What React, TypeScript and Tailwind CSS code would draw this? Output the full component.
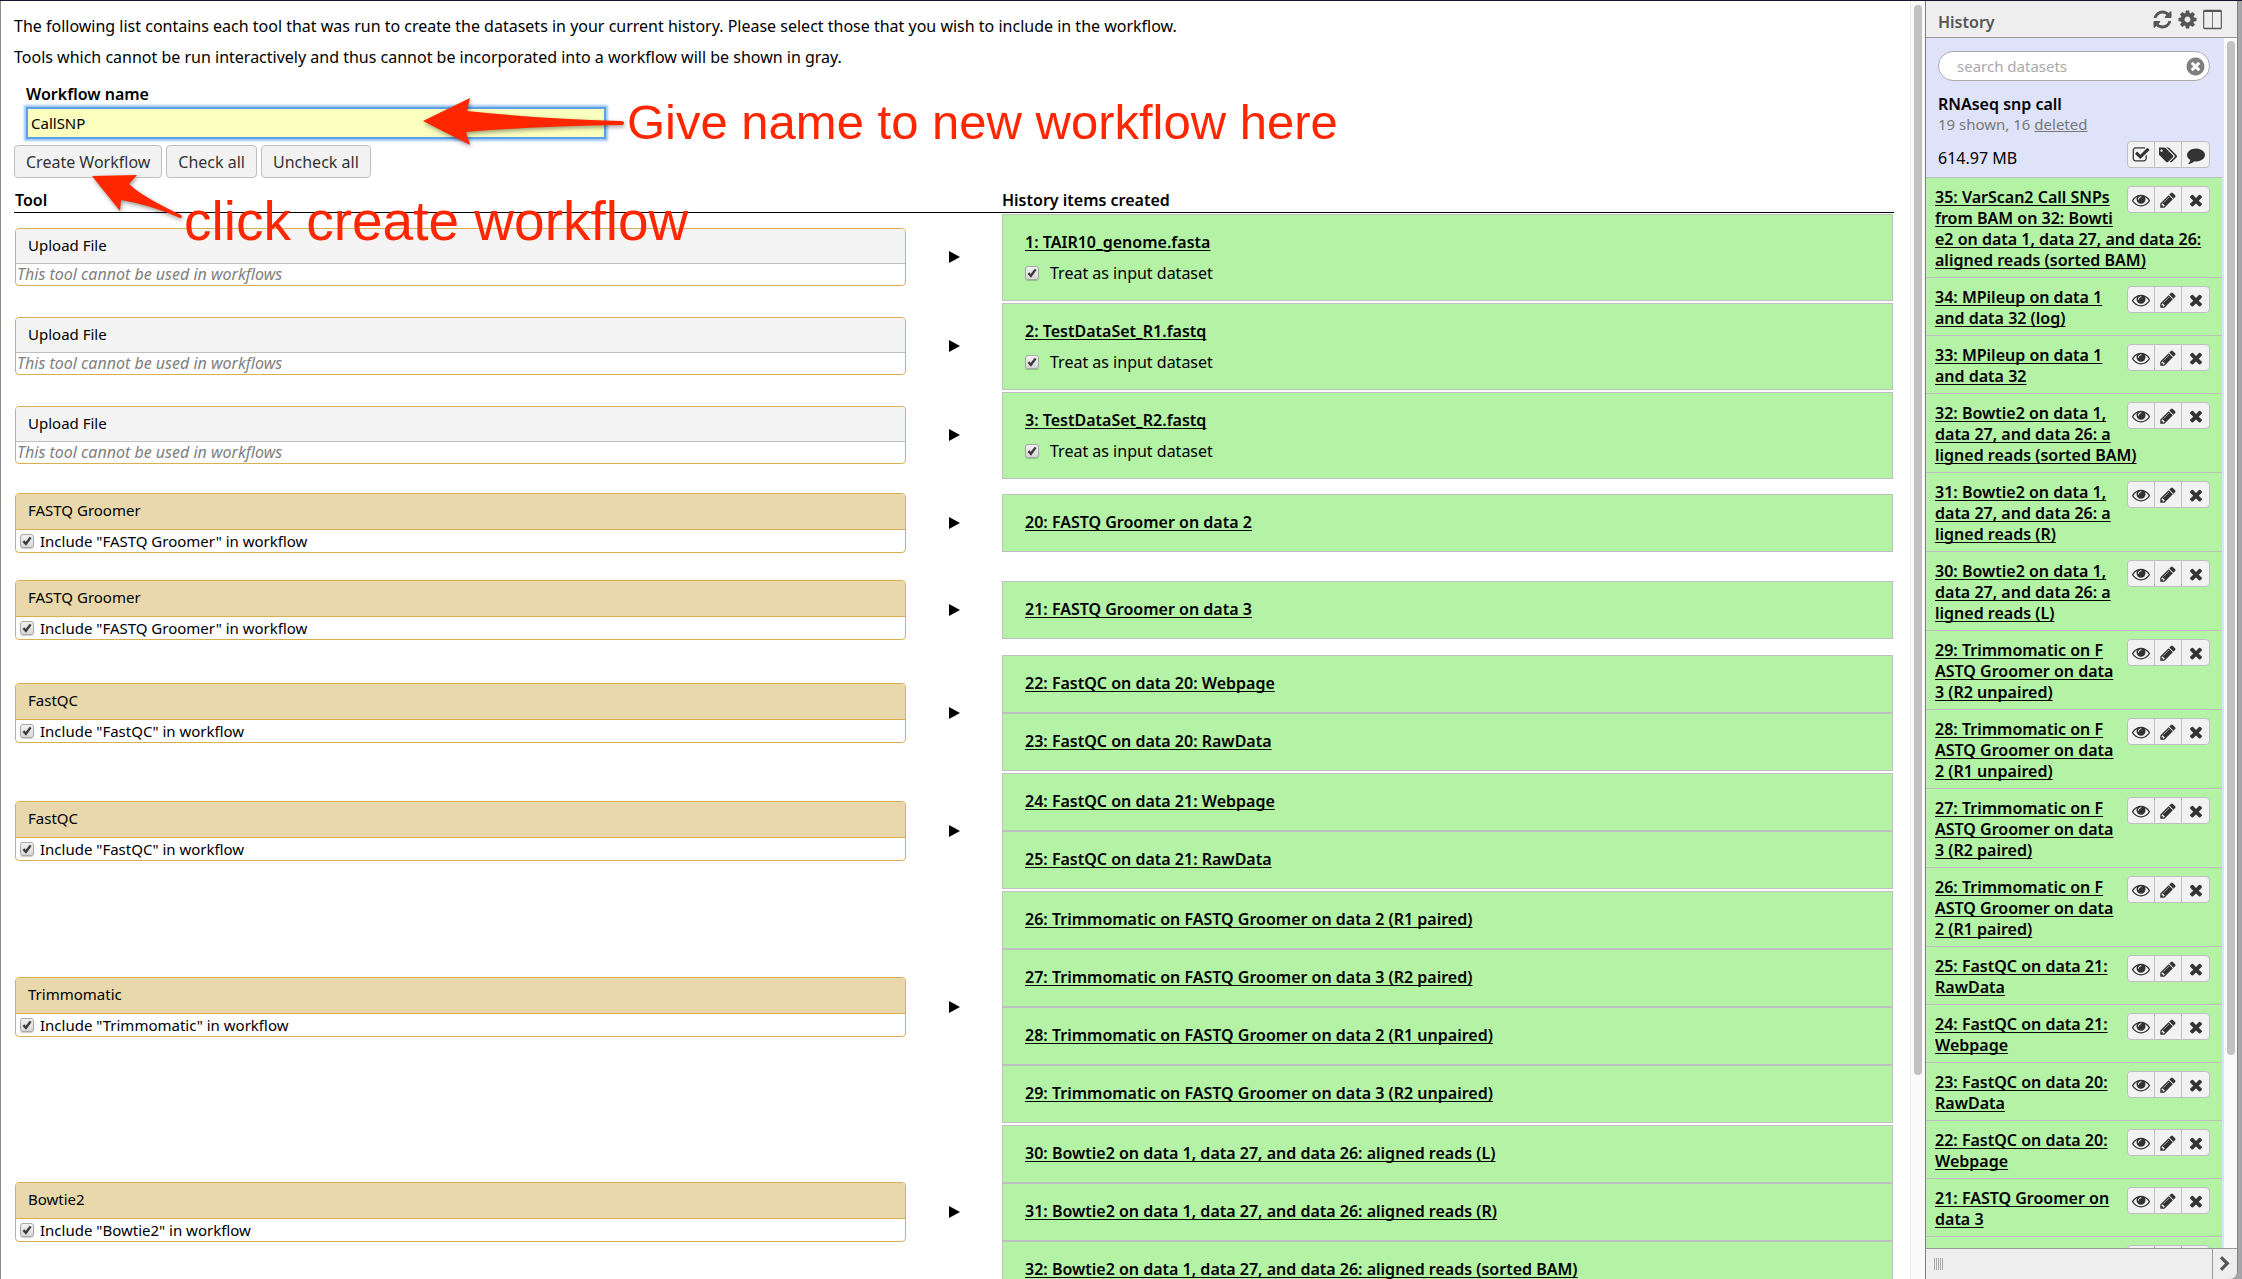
import React from "react";

type IconProps = { d: string; size?: string; box?: string };

function Icon({ d, size = "size-[18px]", box = "0 0 1792 1792" }: IconProps) {
  return (
    <svg viewBox={box} className={size} fill="currentColor" aria-hidden="true">
      <path d={d} />
    </svg>
  );
}

const EYE =
  "M1664 960q-152-236-381-353 61 104 61 225 0 185-131.500 316.500t-316.500 131.500-316.500-131.500-131.500-316.500q0-121 61-225-229 117-381 353 133 205 333.500 326.500t434.500 121.500 434.500-121.500 333.500-326.500zm-720-384q0-20-14-34t-34-14q-125 0-214.500 89.500t-89.500 214.500q0 20 14 34t34 14 34-14 14-34q0-86 61-147t147-61q20 0 34-14t14-34zm848 384q0 34-20 69-140 230-376.500 368.500t-499.500 138.500-499.500-139-376.500-368q-20-35-20-69t20-69q140-229 376.500-368t499.500-139 499.500 139 376.500 368q20 35 20 69z";
const PENCIL =
  "M491 1536l91-91-235-235-91 91v107h128v128h107zm523-928q0-22-22-22-10 0-17 7l-542 542q-7 7-7 17 0 22 22 22 10 0 17-7l542-542q7-7 7-17zm-54-192l416 416-832 832h-416v-416zm683 96q0 53-37 90l-166 166-416-416 166-165q36-38 90-38 53 0 91 38l235 234q37 39 37 91z";
const TIMES =
  "M1490 1322q0 40-28 68l-136 136q-28 28-68 28t-68-28l-294-294-294 294q-28 28-68 28t-68-28l-136-136q-28-28-28-68t28-68l294-294-294-294q-28-28-28-68t28-68l136-136q28-28 68-28t68 28l294 294 294-294q28-28 68-28t68 28l136 136q28 28 28 68t-28 68l-294 294 294 294q28 28 28 68z";
const REFRESH =
  "M1639 1056q0 5-1 7-64 268-268 434.500t-478 166.500q-146 0-282.500-55t-243.500-157l-129 129q-19 19-45 19t-45-19-19-45v-448q0-26 19-45t45-19h448q26 0 45 19t19 45-19 45l-137 137q71 66 161 102t187 36q134 0 250-65t186-179q11-17 53-117 8-23 30-23h192q13 0 22.500 9.500t9.500 22.500zm25-800v448q0 26-19 45t-45 19h-448q-26 0-45-19t-19-45 19-45l138-138q-148-137-349-137-134 0-250 65t-186 179q-11 17-53 117-8 23-30 23h-199q-13 0-22.500-9.500t-9.500-22.500v-7q65-268 270-434.500t480-166.500q146 0 284 55.500t245 156.500l130-129q19-19 45-19t45 19 19 45z";
const COG =
  "M1152 896q0-106-75-181t-181-75-181 75-75 181 75 181 181 75 181-75 75-181zm512-109v222q0 12-8 23t-20 13l-185 28q-19 54-39 91 35 50 107 138 10 12 10 25t-9 23q-27 37-99 108t-94 71q-12 0-26-9l-138-108q-44 23-91 38-16 136-29 186-7 28-36 28h-222q-14 0-24.500-8.500t-11.500-21.500l-28-184q-49-16-90-37l-141 107q-10 9-25 9-14 0-25-11-126-114-165-168-7-10-7-23 0-12 8-23 15-21 51-66.500t54-70.500q-27-50-41-99l-183-27q-13-2-21-12.500t-8-23.500v-222q0-12 8-23t19-13l186-28q14-46 39-92-40-57-107-138-10-12-10-24 0-10 9-23 26-36 98.500-107.500t94.500-71.500q13 0 26 10l138 107q44-23 91-38 16-136 29-186 7-28 36-28h222q14 0 24.500 8.500t11.500 21.500l28 184q49 16 90 37l142-107q9-9 24-9 13 0 25 10 129 119 165 170 7 8 7 22 0 12-8 23-15 21-51 66.500t-54 70.500q26 50 41 98l183 28q13 2 21 12.500t8 23.500z";
const COLUMNS =
  "M224 1600h640v-1344h-672v1312q0 13 9.500 22.500t22.500 9.500zm1376-32v-1312h-672v1344h640q13 0 22.500-9.500t9.500-22.500zm96-1376v1408q0 50-35 85t-85 35h-1360q-50 0-85-35t-35-85v-1408q0-50 35-85t85-35h1360q50 0 85 35t35 85z";
const TIMES_CIRCLE =
  "M1277 1122q0-26-19-45l-181-181 181-181q19-19 19-45 0-27-19-46l-90-90q-19-19-46-19-26 0-45 19l-181 181-181-181q-19-19-45-19-27 0-46 19l-90 90q-19 19-19 46 0 26 19 45l181 181-181 181q-19 19-19 45 0 27 19 46l90 90q19 19 46 19 26 0 45-19l181-181 181 181q19 19 45 19 27 0 46-19l90-90q19-19 19-46zm387-226q0 209-103 385.500t-279.500 279.500-385.500 103-385.500-103-279.500-279.500-103-385.500 103-385.500 279.500-279.500 385.500-103 385.500 103 279.500 279.500 103 385.500z";
const CHECK_SQUARE =
  "M1472 930v318q0 119-84.500 203.500t-203.500 84.500h-832q-119 0-203.500-84.500t-84.500-203.500v-832q0-119 84.500-203.500t203.500-84.500h832q63 0 117 25 15 7 18 23 3 17-9 29l-49 49q-10 10-23 10-3 0-9-2-23-6-45-6h-832q-66 0-113 47t-47 113v832q0 66 47 113t113 47h832q66 0 113-47t47-113v-254q0-13 9-22l64-64q10-10 23-10 6 0 12 3 20 8 20 29zm231-489l-814 814q-24 24-57 24t-57-24l-430-430q-24-24-24-57t24-57l110-110q24-24 57-24t57 24l263 263 647-647q24-24 57-24t57 24l110 110q24 24 24 57t-24 57z";
const TAGS =
  "M384 448q0-53-37.500-90.500t-90.500-37.500-90.500 37.500-37.500 90.500 37.500 90.500 90.500 37.500 90.500-37.500 37.500-90.500zm1067 576q0 53-37 90l-491 492q-39 37-91 37-53 0-90-37l-715-716q-38-37-64.500-101t-26.500-117v-416q0-52 38-90t90-38h416q53 0 117 26.500t102 64.500l715 714q37 39 37 91zm384 0q0 53-37 90l-491 492q-39 37-91 37-36 0-59-14t-53-45l470-470q37-37 37-90 0-52-37-91l-715-714q-38-38-102-64.500t-117-26.500h224q53 0 117 26.500t102 64.500l715 714q37 39 37 91z";
const COMMENT =
  "M1792 896q0 174-120 321.500t-326 233-450 85.500q-70 0-145-8-198 175-460 242-49 14-114 22-17 2-30.500-9t-17.500-29v-1q-3-4-.500-12t2-10 4.500-9.500l6-9 7-8.500 8-9q7-8 31-34.500t34.500-38 31-39.500 32.500-51 27-59 26-76q-157-89-247.500-220t-90.500-281q0-130 71-248.500t191-204.500 286-136.500 348-50.500q244 0 450 85.500t326 233 120 321.500z";
const CHEVRON =
  "M1363 877l-742 742q-19 19-45 19t-45-19l-166-166q-19-19-19-45t19-45l531-531-531-531q-19-19-19-45t19-45l166-166q19-19 45-19t45 19l742 742q19 19 19 45t-19 45z";

type Row = { tool: string; items: string[]; input?: boolean };

const rows: Row[] = [
  { tool: "Upload File", items: ["1: TAIR10_genome.fasta"], input: true },
  { tool: "Upload File", items: ["2: TestDataSet_R1.fastq"], input: true },
  { tool: "Upload File", items: ["3: TestDataSet_R2.fastq"], input: true },
  { tool: "FASTQ Groomer", items: ["20: FASTQ Groomer on data 2"] },
  { tool: "FASTQ Groomer", items: ["21: FASTQ Groomer on data 3"] },
  { tool: "FastQC", items: ["22: FastQC on data 20: Webpage", "23: FastQC on data 20: RawData"] },
  { tool: "FastQC", items: ["24: FastQC on data 21: Webpage", "25: FastQC on data 21: RawData"] },
  {
    tool: "Trimmomatic",
    items: [
      "26: Trimmomatic on FASTQ Groomer on data 2 (R1 paired)",
      "27: Trimmomatic on FASTQ Groomer on data 3 (R2 paired)",
      "28: Trimmomatic on FASTQ Groomer on data 2 (R1 unpaired)",
      "29: Trimmomatic on FASTQ Groomer on data 3 (R2 unpaired)",
    ],
  },
  {
    tool: "Bowtie2",
    items: [
      "30: Bowtie2 on data 1, data 27, and data 26: aligned reads (L)",
      "31: Bowtie2 on data 1, data 27, and data 26: aligned reads (R)",
      "32: Bowtie2 on data 1, data 27, and data 26: aligned reads (sorted BAM)",
    ],
  },
];

const history: string[][] = [
  ["35: VarScan2 Call SNPs", "from BAM on 32: Bowti", "e2 on data 1, data 27, and data 26:", "aligned reads (sorted BAM)"],
  ["34: MPileup on data 1", "and data 32 (log)"],
  ["33: MPileup on data 1", "and data 32"],
  ["32: Bowtie2 on data 1,", "data 27, and data 26: a", "ligned reads (sorted BAM)"],
  ["31: Bowtie2 on data 1,", "data 27, and data 26: a", "ligned reads (R)"],
  ["30: Bowtie2 on data 1,", "data 27, and data 26: a", "ligned reads (L)"],
  ["29: Trimmomatic on F", "ASTQ Groomer on data", "3 (R2 unpaired)"],
  ["28: Trimmomatic on F", "ASTQ Groomer on data", "2 (R1 unpaired)"],
  ["27: Trimmomatic on F", "ASTQ Groomer on data", "3 (R2 paired)"],
  ["26: Trimmomatic on F", "ASTQ Groomer on data", "2 (R1 paired)"],
  ["25: FastQC on data 21:", "RawData"],
  ["24: FastQC on data 21:", "Webpage"],
  ["23: FastQC on data 20:", "RawData"],
  ["22: FastQC on data 20:", "Webpage"],
  ["21: FASTQ Groomer on", "data 3"],
];

function Check() {
  return (
    <span className="relative block size-[14px] shrink-0">
      <input
        type="checkbox"
        defaultChecked
        className="peer block size-[14px] appearance-none rounded-[3px] border border-[#a8a8a8] bg-linear-to-b from-[#f2f2f2] to-[#d8d8d8] shadow-[0_1px_1px_rgba(0,0,0,0.2)]"
      />
      <svg
        viewBox="0 0 14 14"
        className="pointer-events-none absolute inset-0 hidden size-[14px] peer-checked:block"
        fill="none"
        stroke="#3c3c3c"
        strokeWidth="2.4"
        aria-hidden="true"
      >
        <path d="M3.4 7.2 L5.9 9.8 L10.6 3.4" />
      </svg>
    </span>
  );
}

function ToolCard({ row }: { row: Row }) {
  if (row.input) {
    return (
      <section className="flex h-[58px] flex-col overflow-hidden rounded border border-[#d8b04f]">
        <h2 className="h-[35px] shrink-0 border-b border-[#bfbfbf] bg-[#f4f4f4] px-3 leading-8">{row.tool}</h2>
        <p className="pl-px text-base leading-5 text-[#808080] italic">This tool cannot be used in workflows</p>
      </section>
    );
  }
  return (
    <section className="flex h-[60px] flex-col overflow-hidden rounded border border-[#d8b04f]">
      <h2 className="h-9 shrink-0 border-b border-[#d8b04f] bg-[#e9d8ab] px-3 leading-8">{row.tool}</h2>
      <label className="flex items-center gap-[6px] pl-1 leading-[22px]">
        <Check />
        Include "{row.tool}" in workflow
      </label>
    </section>
  );
}

function IconButtons({ label, icons }: { label: string; icons: { name: string; d: string; box?: string }[] }) {
  return (
    <div className="flex h-[27px] shrink-0 divide-x divide-[#bfbfbf] overflow-hidden rounded border border-[#bfbfbf] bg-[#f2f2f2] text-[#333]">
      {icons.map((i) => (
        <button key={i.name} type="button" aria-label={i.name + " " + label} className="flex w-[27px] items-center justify-center">
          <Icon d={i.d} box={i.box} />
        </button>
      ))}
    </div>
  );
}

const itemIcons = [
  { name: "View", d: EYE },
  { name: "Edit", d: PENCIL },
  { name: "Delete", d: TIMES },
];
const historyIcons = [
  { name: "Select", d: CHECK_SQUARE },
  { name: "Tag", d: TAGS, box: "0 0 1835 1792" },
  { name: "Annotate", d: COMMENT },
];

function MainPanel() {
  return (
    <main className="relative min-w-0 flex-1 overflow-hidden pr-4 pl-[13px]">
      <p className="mt-[13px] text-base leading-6">
        The following list contains each tool that was run to create the datasets in your current history. Please select those that you
        wish to include in the workflow.
      </p>
      <p className="mt-[7px] text-base leading-6">
        Tools which cannot be run interactively and thus cannot be incorporated into a workflow will be shown in gray.
      </p>
      <div className="mt-[15px] ml-3 flex flex-col">
        <label htmlFor="workflow-name" className="text-base leading-5 font-semibold">
          Workflow name
        </label>
        <input
          id="workflow-name"
          defaultValue="CallSNP"
          className="mt-[3px] h-8 w-[580px] border-2 border-[#5e9fe8] bg-[#faffbd] px-[3px] shadow-[0_0_2px_2px_#9cc6f6] outline-none"
        />
      </div>
      <div className="mt-[6px] flex gap-1 text-base text-[#333]">
        <button type="button" className="h-[33px] rounded border border-[#bfbfbf] bg-[#f2f2f2] px-[11px]">Create Workflow</button>
        <button type="button" className="h-[33px] rounded border border-[#bfbfbf] bg-[#f2f2f2] px-[11px]">Check all</button>
        <button type="button" className="h-[33px] rounded border border-[#bfbfbf] bg-[#f2f2f2] px-[11px]">Uncheck all</button>
      </div>
      <table className="mt-[11px] w-full table-fixed border-collapse">
        <colgroup>
          <col className="w-[47.5%]" />
          <col className="w-[5%]" />
          <col className="w-[47.5%]" />
        </colgroup>
        <thead>
          <tr className="h-[23px] border-b border-black text-left text-base leading-[22px]">
            <th className="px-px font-semibold">Tool</th>
            <th aria-label="Produces" />
            <th className="px-px font-semibold">History items created</th>
          </tr>
        </thead>
        <tbody>
          {rows.map((row, n) => (
            <tr key={n} className={row.input ? "h-[89px]" : "h-[87px]"}>
              <td className="p-px">
                <ToolCard row={row} />
              </td>
              <td>
                <svg viewBox="0 0 11 12" className="mx-auto h-3 w-[11px]" aria-hidden="true">
                  <path d="M0 0 L11 6 L0 12 Z" />
                </svg>
              </td>
              <td className="p-px">
                {row.items.map((item) => (
                  <div key={item} className="border border-[#bfbfbf] bg-[#b4f2a6] px-[22px] pt-[17px] text-base leading-5">
                    <a href="#" className="block font-semibold underline decoration-1 underline-offset-2 [text-decoration-skip-ink:none]">
                      {item}
                    </a>
                    {row.input ? (
                      <label className="mt-[11px] mb-[17px] flex items-center gap-[11px]">
                        <Check />
                        Treat as input dataset
                      </label>
                    ) : (
                      <div className="h-[19px]" />
                    )}
                  </div>
                ))}
              </td>
            </tr>
          ))}
        </tbody>
      </table>

      <div className="pointer-events-none absolute top-0 left-0 font-['Liberation_Sans',Arial,sans-serif] leading-[60px] whitespace-nowrap text-[#ff2600]">
        <svg viewBox="0 0 640 240" className="h-[240px] w-[640px] drop-shadow-[1px_2px_2px_rgba(0,0,0,0.4)]" fill="currentColor" aria-hidden="true">
          <path d="M422 120 L469 97 L466 110 Q540 118 620 120 Q623 120 623 122 Q623 124 620 124 Q540 125 465 131 L469 144 Z" />
          <path d="M91 175 L136 174 L128 183 Q140 195 180 214 Q182 217 179 217 Q150 204 120 199 L119 210 Z" />
        </svg>
        <p className="absolute top-[91px] left-[626px] text-[49px]">Give name to new workflow here</p>
        <p className="absolute top-[190px] left-[183px] text-[55px]">click create workflow</p>
      </div>
    </main>
  );
}

function HistoryPanel() {
  return (
    <aside className="flex w-[313px] shrink-0 flex-col overflow-hidden rounded-br-lg border-r border-l border-[#808080] bg-white">
      <header className="flex h-[37px] shrink-0 items-center border-b border-[#999] bg-[#eee] pr-[14px] pl-3 text-[#555]">
        <h1 className="mt-[6px] flex-1 text-base font-semibold">History</h1>
        <div className="flex gap-1">
          <button type="button" aria-label="Refresh history"><Icon d={REFRESH} size="size-[21px]" /></button>
          <button type="button" aria-label="History options"><Icon d={COG} size="size-[21px]" /></button>
          <button type="button" aria-label="View all histories"><Icon d={COLUMNS} size="size-[21px]" /></button>
        </div>
      </header>
      <div className="flex min-h-0 flex-1">
        <div className="min-w-0 flex-1 overflow-hidden bg-[#dfe3fa] pr-0.5">
          <div className="h-[139px] pt-[13px] pr-3 pl-3">
            <div className="flex h-[30px] items-center rounded-full border border-[#aaa] bg-white pr-[3px] pl-[18px]">
              <input aria-label="search datasets" placeholder="search datasets" className="min-w-0 flex-1 bg-transparent outline-none placeholder:text-[#a9a9a9]" />
              <button type="button" aria-label="Clear search" className="text-[#7f7f7f]"><Icon d={TIMES_CIRCLE} size="size-[21px]" /></button>
            </div>
            <h2 className="mt-[13px] text-base leading-5 font-semibold">RNAseq snp call</h2>
            <p className="leading-[21px] text-[#777]">
              19 shown, 16 <a href="#" className="underline">deleted</a>
            </p>
            <div className="mt-[6px] flex items-center justify-between">
              <span className="pt-[6px] text-base leading-5">614.97 MB</span>
              <IconButtons label="history" icons={historyIcons} />
            </div>
          </div>
          <ul>
            {history.map((lines) => (
              <li key={lines[0]} className="relative border-t border-[#bfbfbf] bg-[#b4f2a6] pt-[9px] pb-[6px] pl-[9px]">
                <a
                  href="#"
                  className="block text-base leading-[21px] font-semibold underline decoration-1 underline-offset-2 [text-decoration-skip-ink:none]"
                >
                  {lines.map((line) => (
                    <span key={line} className="block whitespace-nowrap">{line}</span>
                  ))}
                </a>
                <div className="absolute top-2 right-3">
                  <IconButtons label={lines[0]} icons={itemIcons} />
                </div>
              </li>
            ))}
            <li className="relative h-[58px] border-t border-[#bfbfbf] bg-[#b4f2a6]">
              <div className="absolute top-2 right-3">
                <IconButtons label="20: FASTQ Groomer on data 2" icons={itemIcons} />
              </div>
            </li>
          </ul>
        </div>
        <div className="w-[13px] shrink-0 bg-[#fafafa] pt-[3px] pl-[3px]">
          <div className="h-[84%] w-2 rounded-full bg-[#c1c1c1]" />
        </div>
      </div>
      <footer className="flex h-[31px] shrink-0 border-t border-[#999] bg-[#eee]">
        <div className="flex flex-1 items-center pl-2">
          <div className="flex h-3 gap-px">
            {[0, 1, 2, 3, 4].map((n) => (
              <span key={n} className="w-px bg-[#aaa]" />
            ))}
          </div>
        </div>
        <button type="button" aria-label="Hide history panel" className="flex w-[25px] items-center justify-center border-l border-[#999] text-[#555]">
          <Icon d={CHEVRON} size="size-4" />
        </button>
      </footer>
    </aside>
  );
}

export default function App() {
  return (
    <div className="flex h-screen flex-col overflow-hidden border-t border-[#16162a] bg-[#a6a6a9] font-['Noto_Sans','Lucida_Grande',sans-serif] text-[15px] text-black">
      <div className="flex min-h-0 flex-1 pr-1">
        <div className="flex min-w-0 flex-1 border-l border-[#8c8c8c] bg-white">
          <MainPanel />
          <div className="w-[15px] shrink-0 border-l border-[#e8e8e8] bg-[#fafafa] pt-1 pl-[3px]">
            <div className="h-[84%] w-2 rounded-full bg-[#c1c1c1]" />
          </div>
        </div>
        <HistoryPanel />
      </div>
    </div>
  );
}
